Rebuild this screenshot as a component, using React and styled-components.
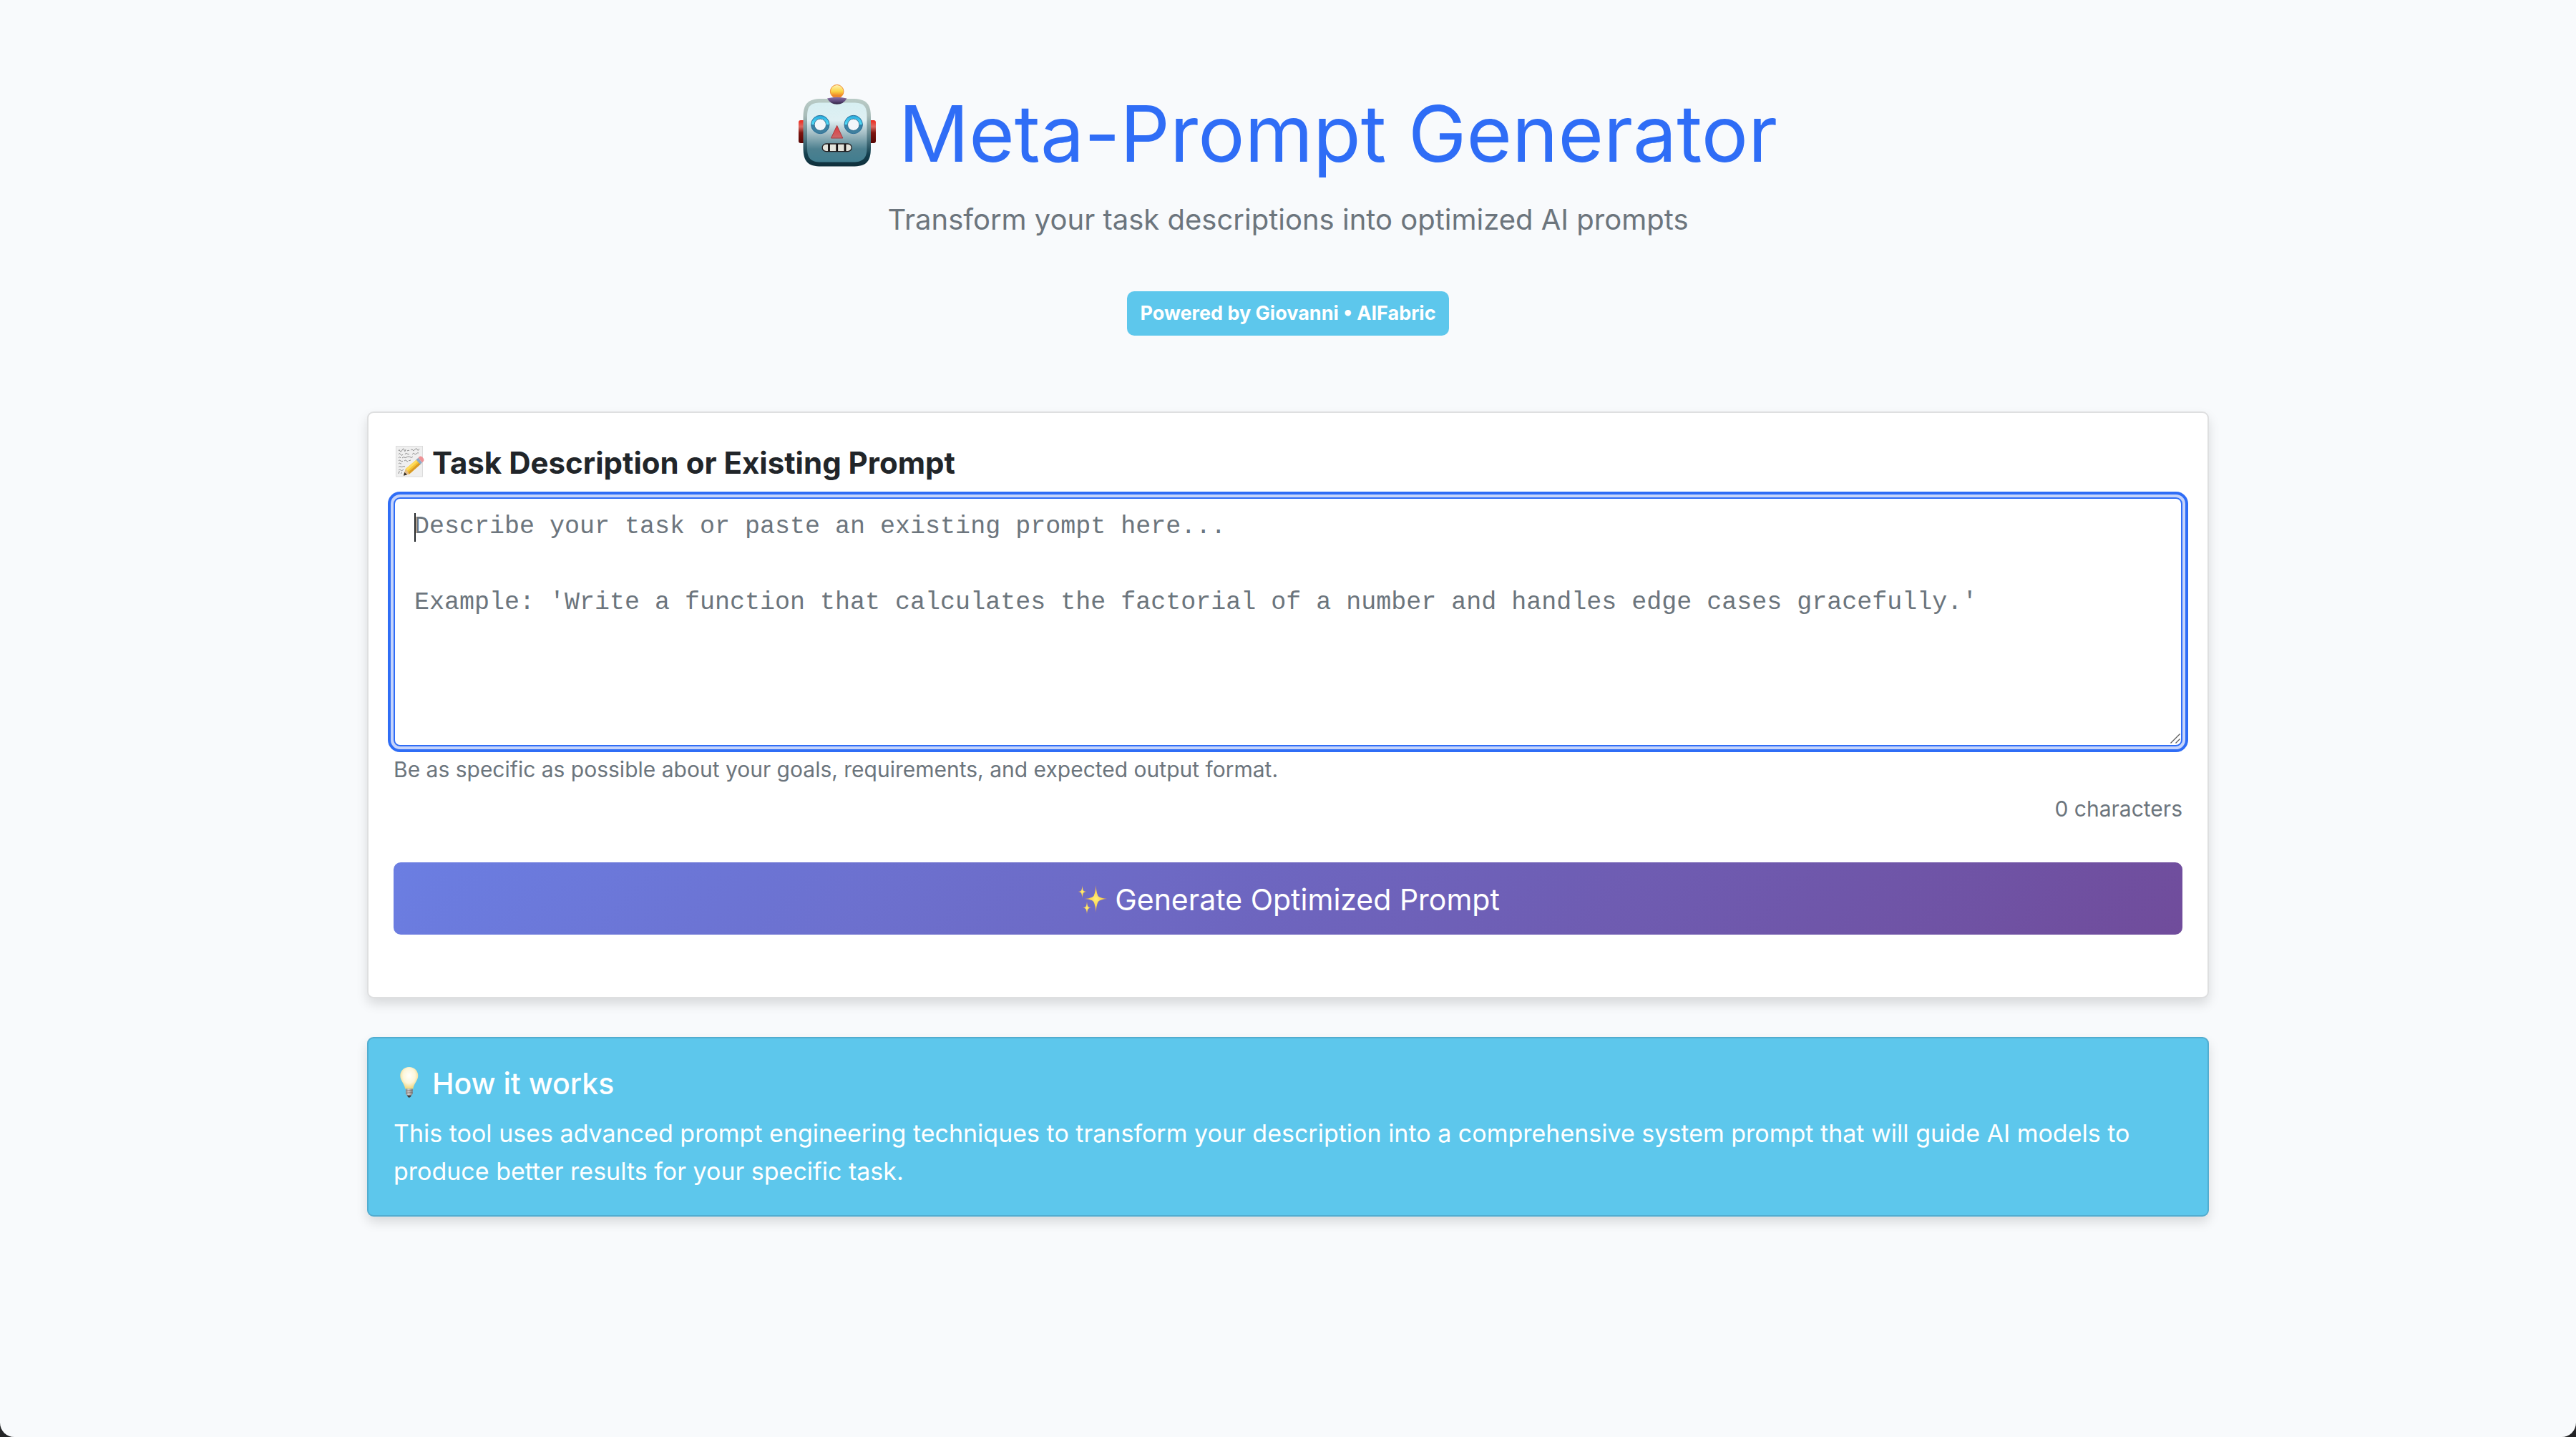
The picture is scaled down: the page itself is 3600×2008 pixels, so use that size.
import React, { useState } from 'react';
import styled, { createGlobalStyle } from 'styled-components';

const colors = {
  page: '#f8fafc',
  primary: '#2f6df6',
  ring: '#c6d4fb',
  info: '#5dc7ec',
  infoBorder: '#52add0',
  text: '#212529',
  muted: '#6c757d',
};

const GlobalStyle = createGlobalStyle`
  *, *::before, *::after { box-sizing: border-box; }
  body {
    margin: 0;
    background: #232426;
    color: ${colors.text};
    font-family: Inter, 'Open Sans', sans-serif;
    font-size: 34px;
    line-height: 53px;
  }
`;

const Page = styled.div`
  min-height: 100vh;
  padding: 112px 35px;
  background: ${colors.page};
  border-radius: 0 0 20px 20px;
`;

const Container = styled.main`
  display: flex;
  flex-direction: column;
  gap: 54px;
  max-width: 2574px;
  margin: 0 auto;
`;

const Header = styled.header`
  display: flex;
  flex-direction: column;
  align-items: center;
  margin-bottom: 52px;
  text-align: center;
`;

const Title = styled.h1`
  display: flex;
  align-items: center;
  gap: 32px;
  margin: 0 0 14px;
  color: ${colors.primary};
  font-size: 109px;
  font-weight: 400;
  line-height: 148px;
`;

const Lead = styled.p`
  margin: 0 0 67px;
  color: ${colors.muted};
  font-size: 40px;
  line-height: 66px;
`;

const Badge = styled.span`
  padding: 0 18px;
  border-radius: 10px;
  background: ${colors.info};
  color: #fff;
  font-size: 27px;
  font-weight: 700;
  line-height: 62px;
`;

const Card = styled.section`
  padding: 35px;
  border: 2px solid ${(p) => (p.$info ? colors.infoBorder : '#dedfe0')};
  border-radius: 9px;
  background: ${(p) => (p.$info ? colors.info : '#fff')};
  color: ${(p) => (p.$info ? '#fff' : colors.text)};
  box-shadow: 0 8px 16px rgba(0, 0, 0, 0.13);
`;

const Form = styled.form`
  display: flex;
  flex-direction: column;
  padding-bottom: 52px;
`;

const Label = styled.label`
  display: flex;
  align-items: center;
  gap: 10px;
  margin-bottom: 13px;
  font-size: 42px;
  font-weight: 700;
  line-height: 70px;
`;

const Field = styled.div`
  position: relative;
  display: flex;
`;

const TextArea = styled.textarea`
  flex: 1;
  min-width: 0;
  padding: 13px 27px;
  border: 2px solid ${colors.primary};
  border-radius: 9px;
  outline: none;
  box-shadow: 0 0 0 4px ${colors.ring}, 0 0 0 8px ${colors.primary};
  background: #fff;
  color: ${colors.text};
  font-family: 'Liberation Mono', monospace;
  font-size: 35px;
  line-height: 53px;
  resize: none;
  overflow: hidden;

  &::placeholder {
    color: ${colors.muted};
    opacity: 1;
  }
`;

const Caret = styled.span`
  position: absolute;
  top: 22px;
  left: 29px;
  width: 2px;
  height: 40px;
  background: ${colors.text};
`;

const Grip = styled.svg`
  position: absolute;
  right: 3px;
  bottom: 4px;
`;

const Help = styled.p`
  margin: 9px 0 0;
  color: ${colors.muted};
  font-size: 30px;
  line-height: 46px;
  text-align: ${(p) => (p.$end ? 'right' : 'left')};
`;

const SubmitButton = styled.button`
  display: flex;
  align-items: center;
  justify-content: center;
  gap: 10px;
  margin-top: 52px;
  padding: 22px 26px 18px;
  border: 0;
  border-radius: 10px;
  background: linear-gradient(135deg, #6b7ee2 0%, #704c9b 100%);
  color: #fff;
  font-family: inherit;
  font-size: 41px;
  font-weight: 400;
  line-height: 61px;
  cursor: pointer;
`;

const InfoTitle = styled.h2`
  display: flex;
  align-items: center;
  gap: 10px;
  margin: 0 0 15px;
  font-size: 41px;
  font-weight: 500;
  line-height: 56px;
`;

const InfoText = styled.p`
  margin: 0;
  font-size: 34px;
  font-weight: 400;
  line-height: 53px;
`;

const RobotIcon = () => (
  <svg width="108" height="136" viewBox="0 0 108 136" aria-hidden="true">
    <defs>
      <linearGradient id="rim" x1="0" y1="0" x2="0" y2="1">
        <stop offset="0" stopColor="#b9cbc6" />
        <stop offset=".25" stopColor="#a9bcb9" />
        <stop offset=".6" stopColor="#4c7580" />
        <stop offset=".82" stopColor="#143f4e" />
        <stop offset="1" stopColor="#102f3b" />
      </linearGradient>
      <linearGradient id="face" x1="0" y1="0" x2="0" y2="1">
        <stop offset="0" stopColor="#d7eff2" />
        <stop offset=".3" stopColor="#dff0f3" />
        <stop offset=".52" stopColor="#a3bdc4" />
        <stop offset=".78" stopColor="#4d808f" />
        <stop offset="1" stopColor="#417d8f" />
      </linearGradient>
      <linearGradient id="ear" x1="0" y1="0" x2="0" y2="1">
        <stop offset="0" stopColor="#f0281c" />
        <stop offset=".28" stopColor="#dd6a62" />
        <stop offset=".55" stopColor="#7d140f" />
        <stop offset="1" stopColor="#560503" />
      </linearGradient>
      <linearGradient id="ball" x1="0" y1="0" x2="0" y2="1">
        <stop offset="0" stopColor="#fff3b8" />
        <stop offset=".5" stopColor="#fbd443" />
        <stop offset=".8" stopColor="#f08a2a" />
        <stop offset="1" stopColor="#ef8a33" />
      </linearGradient>
      <linearGradient id="cap" x1="0" y1="0" x2="0" y2="1">
        <stop offset="0" stopColor="#8a72a8" />
        <stop offset=".6" stopColor="#5a4676" />
        <stop offset="1" stopColor="#2c2140" />
      </linearGradient>
      <linearGradient id="eye" x1="0" y1="0" x2="0" y2="1">
        <stop offset="0" stopColor="#27a9dc" />
        <stop offset=".48" stopColor="#52dcf8" />
        <stop offset=".52" stopColor="#3580a6" />
        <stop offset="1" stopColor="#42809c" />
      </linearGradient>
      <linearGradient id="nose" x1="0" y1="0" x2="0" y2="1">
        <stop offset="0" stopColor="#e2373b" />
        <stop offset="1" stopColor="#c9696b" />
      </linearGradient>
    </defs>
    <rect x="0" y="50" width="10" height="32" rx="3" fill="url(#ear)" />
    <rect x="98" y="50" width="10" height="32" rx="3" fill="url(#ear)" />
    <path d="M32 20H75C95 20 101 27 101 46V88C101 108 95 114.500 75 114.500H32C13 114.500 6.500 108 6.500 88V46C6.500 27 13 20 32 20Z" fill="url(#rim)" />
    <path d="M31 25.500H76C91 25.500 95.500 30 95.500 45V89C95.500 103 90 108.500 76 108.500H31C17 108.500 12 103 12 89V45C12 30 17 25.500 31 25.500Z" fill="url(#face)" />
    <circle cx="53.700" cy="9.800" r="9.300" fill="url(#ball)" stroke="#f08a2d" strokeWidth="1" />
    <path d="M40 19.500Q53.700 16 67.500 19.500Q63 27.700 53.700 27.700Q44.500 27.700 40 19.500Z" fill="url(#cap)" />
    {[30.3, 76.7].map((x) => (
      <g key={x}>
        <circle cx={x} cy="56" r="12.700" fill="url(#eye)" stroke="#2b6f98" strokeWidth="1" />
        <circle cx={x} cy="56.300" r="8.200" fill="#f3f6fa" stroke="#3a7593" strokeWidth="1" />
      </g>
    ))}
    <path d="M53.700 57.500L61.800 75H45.500Z" fill="url(#nose)" stroke="#a8393e" strokeWidth="1" strokeLinejoin="round" />
    <rect x="33.200" y="83" width="41" height="10.600" rx="5.300" fill="#e4e4dc" stroke="#241f20" strokeWidth="1.300" />
    <path d="M42.500 83V93.600M53.700 83V93.600M65 83V93.600" stroke="#141011" strokeWidth="2.800" />
  </svg>
);

const MemoIcon = () => (
  <svg width="44" height="48" viewBox="0 0 44 48" aria-hidden="true">
    <rect x="3.500" y=".5" width="37" height="42.500" fill="#efefef" stroke="#dcdcdc" />
    <g fill="none" stroke="#777" strokeWidth=".8">
      <path d="M7 7q1-3 2 0t3-1 3 0 2-1M19 7l2-1 1 1M24 6q2-2 3 0t3-1 3 0 3-1" />
      <path d="M7 12q1-3 3 0t3 0M16 12q1-3 3-1t3 0M26 12q2-3 3-1t3 0 3-1" />
      <path d="M7 17q2-3 3 0M12 17q2-2 3-1t3 0 3-1 3 1 3-1" />
      <path d="M7 21q1-2 3 0t3 0M15 21q2-2 3 0l2 1M21 21l3-1" />
      <path d="M7 25q1-2 3 0l1 0M7 30q1-2 3-1t3 0 3 0M7 34q2-2 3 0t4-1M7 39q0-4 2-3M10 39l2-2" />
    </g>
    <path d="M14 41L17 32L33 18.500L38.500 25L22 39.500Z" fill="#f5c535" />
    <path d="M17 32L33 18.500L35 20.800L19 35Z" fill="#ffdc5e" />
    <path d="M22 39.500L38.500 25L36.500 22.800L20.500 37Z" fill="#d99a26" />
    <path d="M14 41.500L17 32L22 39.500Z" fill="#e3bd8a" />
    <path d="M14 41.800L15.300 37L19 40.300Z" fill="#2e2b2a" />
    <path d="M31.500 19.500L34.500 16.800L40 23.300L37.500 26Z" fill="#8ea9c6" />
    <path d="M34.500 16.800Q37 13 40 15.500Q44 19 41.500 22L40 23.300Z" fill="#ee9296" />
  </svg>
);

const SparklesIcon = () => (
  <svg width="44" height="48" viewBox="0 0 44 48" aria-hidden="true">
    <defs>
      <radialGradient id="spark">
        <stop offset="0" stopColor="#fff07a" />
        <stop offset=".5" stopColor="#fbd551" />
        <stop offset="1" stopColor="#c98a55" />
      </radialGradient>
    </defs>
    <g fill="url(#spark)">
      <path d="M27.500 2.500Q28.500 18 32 19.300Q36 21.500 43.500 22Q36 22.500 32 24.700Q28.500 27 27.500 41.500Q26.500 27 23 24.700Q19 22.500 11.500 22Q19 21.500 23 19.300Q26.500 18 27.500 2.500Z" />
      <path d="M8.500 3Q9 10 10.300 10.700Q11.500 11.700 14.500 12Q11.500 12.300 10.300 13.500Q9 15 8.500 21Q8 15 6.700 13.500Q5.500 12.300 2.500 12Q5.500 11.700 6.700 10.700Q8 10 8.500 3Z" />
      <path d="M15 25.500Q15.500 32 16.800 33Q18 34.200 21 34.500Q18 34.800 16.800 36Q15.500 37.500 15 43.500Q14.500 37.500 13.200 36Q12 34.800 9 34.500Q12 34.200 13.200 33Q14.500 32 15 25.500Z" />
    </g>
  </svg>
);

const BulbIcon = () => (
  <svg width="44" height="48" viewBox="0 0 44 48" aria-hidden="true">
    <defs>
      <radialGradient id="glass" cx=".5" cy=".4" r=".62">
        <stop offset="0" stopColor="#fffffb" />
        <stop offset=".55" stopColor="#fcf6da" />
        <stop offset="1" stopColor="#efd273" />
      </radialGradient>
      <linearGradient id="screw">
        <stop offset="0" stopColor="#8a8786" />
        <stop offset=".4" stopColor="#d4d0cf" />
        <stop offset="1" stopColor="#7c7978" />
      </linearGradient>
    </defs>
    <path d="M21.800 1C29 1 34.300 6.500 34.300 13C34.300 20 28.500 23.500 27.300 31.500H16.300C15 23.500 9.300 20 9.300 13C9.300 6.500 14.600 1 21.800 1Z" fill="url(#glass)" />
    <path d="M17 31.500H26.700V38.500L24.800 41H18.900L17 38.500Z" fill="url(#screw)" />
    <path d="M17 34.300L26.700 33.500M17 37.300L26.700 36.500" stroke="#77716f" strokeWidth=".8" />
    <path d="M18.700 40.500H25L23.500 43Q21.800 44.500 20.200 43Z" fill="#3b3a3c" />
  </svg>
);

const PLACEHOLDER =
  "Describe your task or paste an existing prompt here...\n\nExample: 'Write a function that calculates the factorial of a number and handles edge cases gracefully.'";

export default function App() {
  const [task, setTask] = useState('');

  return (
    <>
      <GlobalStyle />
      <Page>
        <Container>
          <Header>
            <Title>
              <RobotIcon />
              Meta-Prompt Generator
            </Title>
            <Lead>Transform your task descriptions into optimized AI prompts</Lead>
            <Badge>Powered by Giovanni • AIFabric</Badge>
          </Header>

          <Card>
            <Form onSubmit={(e) => e.preventDefault()}>
              <Label htmlFor="task">
                <MemoIcon />
                Task Description or Existing Prompt
              </Label>
              <Field>
                <TextArea
                  id="task"
                  rows={6}
                  value={task}
                  onChange={(e) => setTask(e.target.value)}
                  placeholder={PLACEHOLDER}
                  aria-describedby="task-help"
                />
                {task === '' && <Caret aria-hidden="true" />}
                <Grip width="14" height="14" viewBox="0 0 14 14" aria-hidden="true">
                  <path d="M.5 13.500L13.500.5M7.500 13.500L13.500 7.500" stroke="#5f5f5f" strokeWidth="1.400" />
                </Grip>
              </Field>
              <Help id="task-help">
                Be as specific as possible about your goals, requirements, and expected output format.
              </Help>
              <Help $end>{task.length} characters</Help>
              <SubmitButton type="submit">
                <SparklesIcon />
                Generate Optimized Prompt
              </SubmitButton>
            </Form>
          </Card>

          <Card $info>
            <InfoTitle>
              <BulbIcon />
              How it works
            </InfoTitle>
            <InfoText>
              This tool uses advanced prompt engineering techniques to transform your description into a
              comprehensive system prompt that will guide AI models to produce better results for your
              specific task.
            </InfoText>
          </Card>
        </Container>
      </Page>
    </>
  );
}
